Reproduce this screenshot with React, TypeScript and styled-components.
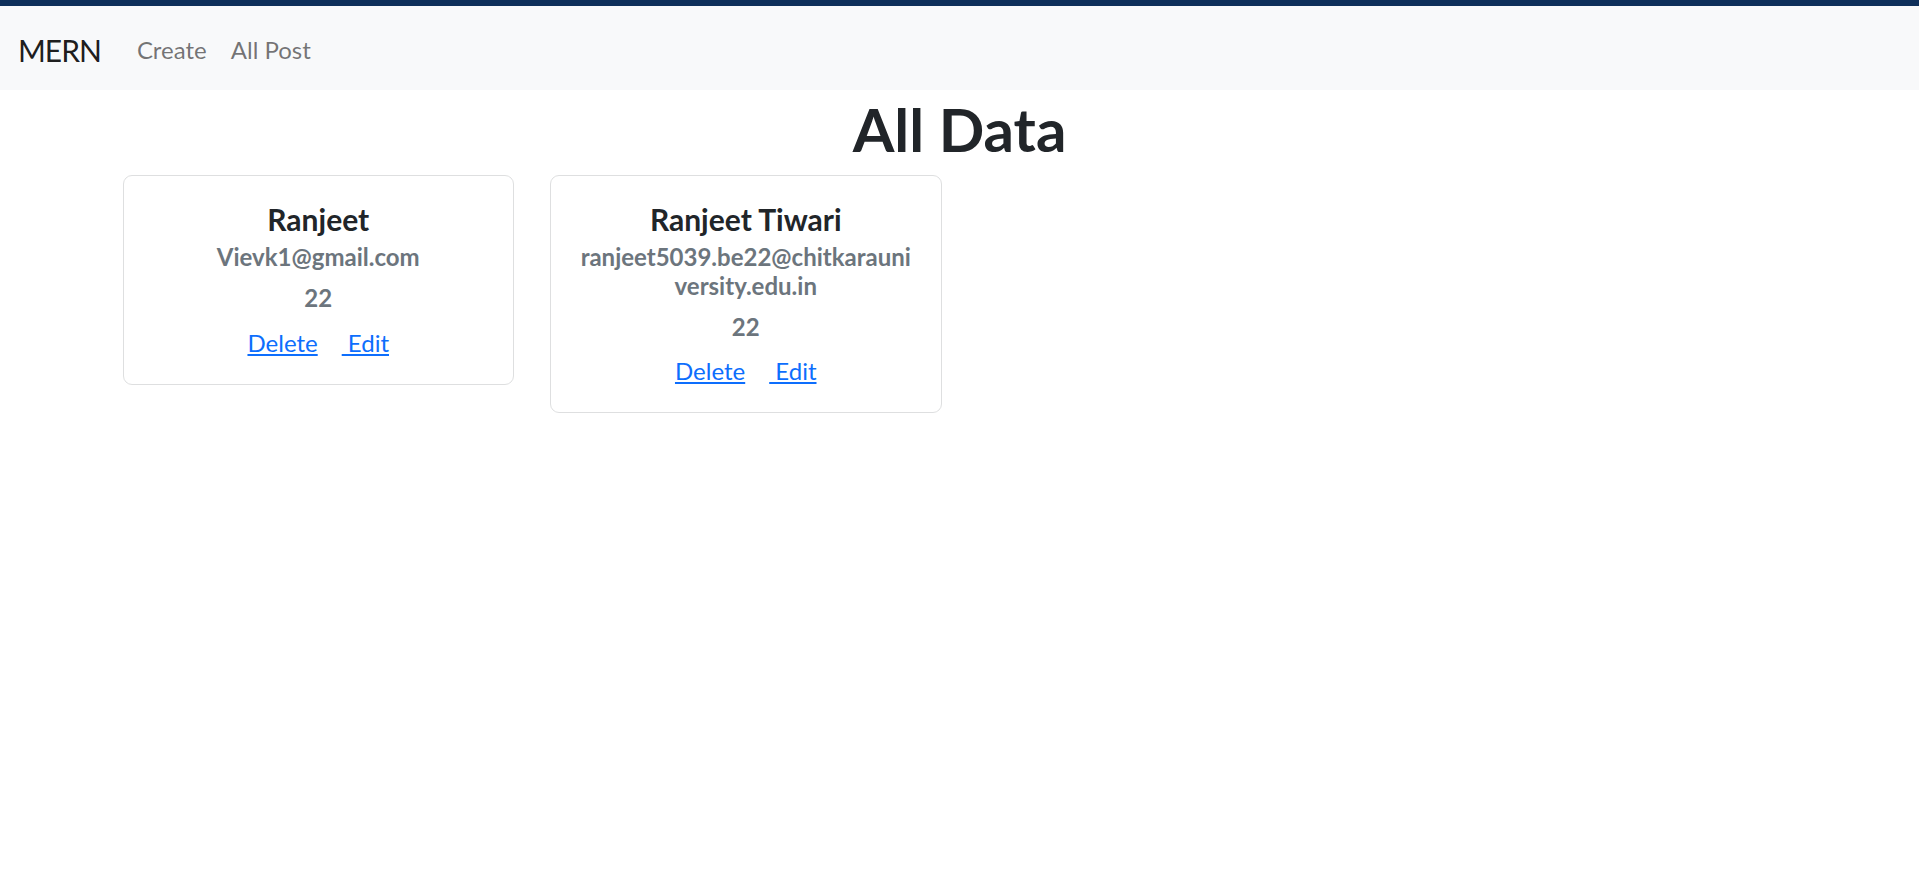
import React from 'react';
import styled, { createGlobalStyle } from 'styled-components';

const GlobalStyle = createGlobalStyle`
  * {
    box-sizing: border-box;
  }
  body {
    margin: 0;
    background: #ffffff;
    color: #212529;
    font-family: Lato, "Noto Sans", "Liberation Sans", sans-serif;
    font-size: 24px;
    line-height: 1.5;
  }
`;

const colors = {
  text: '#212529',
  muted: '#6c757d',
  link: '#0d6efd',
  navBg: '#f8f9fa',
  strip: '#0e2f5a',
  border: '#dedfe0',
};

const Strip = styled('div')`
  height: 6px;
  background-color: ${colors.strip};
`;

const Navbar = styled('nav')`
  display: flex;
  align-items: center;
  height: 84px;
  padding: 4px 18px 0;
  background-color: ${colors.navBg};
`;

const Brand = styled('a')`
  margin-right: 24px;
  font-size: 30px;
  line-height: 45px;
  letter-spacing: -1px;
  color: rgba(0, 0, 0, 0.9);
  text-decoration: none;
`;

const NavLink = styled('a')`
  padding: 0 12px;
  font-size: 24px;
  line-height: 36px;
  color: rgba(0, 0, 0, 0.55);
  text-decoration: none;
`;

const Title = styled('h1')`
  margin: 0 0 10px;
  padding-top: 3px;
  font-size: 60px;
  line-height: 72px;
  font-weight: 700;
  text-align: center;
  color: ${colors.text};
`;

const Container = styled('div')`
  width: 1710px;
  margin: 0 auto;
  padding: 0 18px;
`;

const CardGrid = styled('div')`
  display: grid;
  grid-template-columns: repeat(4, 1fr);
  column-gap: 36px;
  align-items: start;
`;

const Card = styled('div')`
  padding: 25px 24px 23px;
  border: 1px solid ${colors.border};
  border-radius: 9px;
  text-align: center;
`;

const Name = styled('h5')`
  margin: 0 0 12px;
  font-size: 30px;
  line-height: 36px;
  font-weight: 700;
  color: ${colors.text};
`;

const Info = styled('h6')<{ $top?: number }>`
  margin: ${(p) => p.$top ?? 0}px 0 12px;
  font-size: 24px;
  line-height: 28.8px;
  font-weight: 700;
  color: ${colors.muted};
  overflow-wrap: anywhere;
`;

const Actions = styled('div')`
  line-height: 36px;
`;

const ActionLink = styled('a')<{ $gap?: number }>`
  margin-left: ${(p) => p.$gap ?? 0}px;
  color: ${colors.link};
  text-decoration: underline;
  white-space: pre;
  cursor: pointer;
`;

const users = [
  { name: 'Ranjeet', email: 'Vievk1@gmail.com', age: 22 },
  { name: 'Ranjeet Tiwari', email: 'ranjeet5039.be22@chitkarauniversity.edu.in', age: 22 },
];

const App = () => {
  return (
    <>
      <GlobalStyle />
      <Strip />
      <Navbar>
        <Brand href="#">MERN</Brand>
        <NavLink href="#">Create</NavLink>
        <NavLink href="#">All Post</NavLink>
      </Navbar>
      <Title>All Data</Title>
      <Container>
        <CardGrid>
          {users.map((u) => (
            <Card key={u.email}>
              <Name>{u.name}</Name>
              <Info $top={-6}>{u.email}</Info>
              <Info>{u.age}</Info>
              <Actions>
                <ActionLink>Delete</ActionLink>
                <ActionLink $gap={24}>{' Edit'}</ActionLink>
              </Actions>
            </Card>
          ))}
        </CardGrid>
      </Container>
    </>
  );
};

export default App;
